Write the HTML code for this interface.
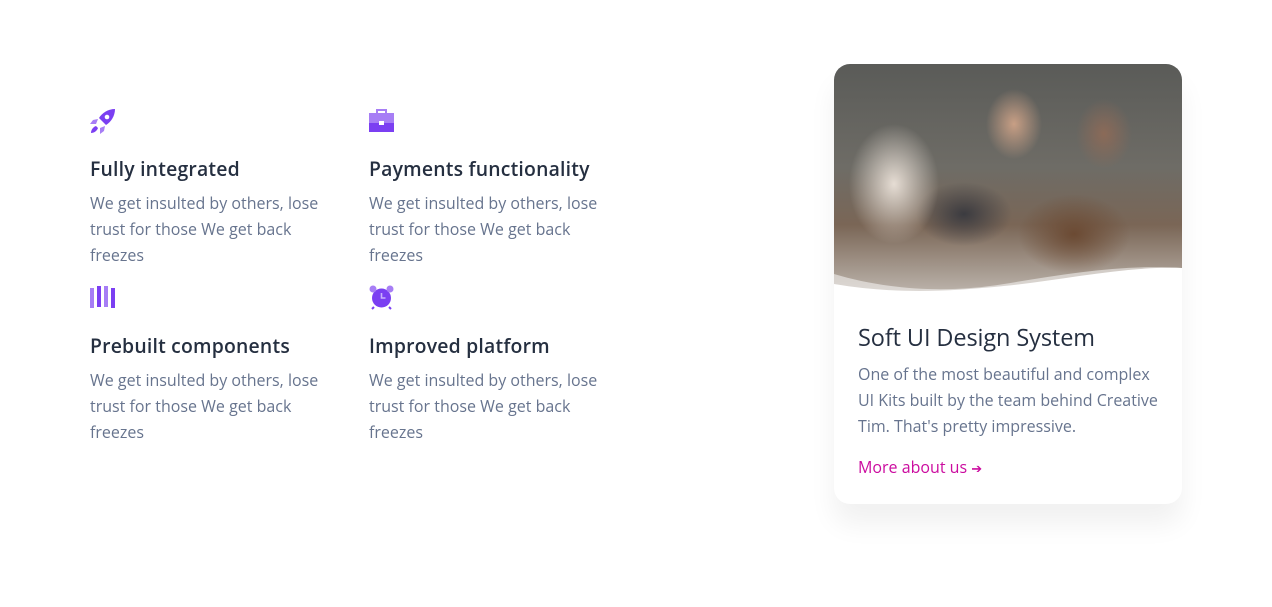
<!DOCTYPE html>
<html><head><style>
*{margin:0;padding:0;box-sizing:border-box}
body{width:1272px;height:607px;background:#fff;font-family:"Open Sans","Liberation Sans",sans-serif;position:relative;overflow:hidden}
.f{position:absolute;width:250px}
.f h5{font-size:19.4px;font-weight:600;color:#252f40;margin:0;line-height:24px;letter-spacing:0.2px}
.f p{font-size:16px;color:#67748e;line-height:26px;margin-top:9px}
.ic{position:absolute}
.card{position:absolute;left:834px;top:64px;width:348px;height:440px;border-radius:16px;background:#fff;box-shadow:0 20px 27px rgba(0,0,0,0.06);overflow:hidden}
.img{position:absolute;left:0;top:0;width:348px;height:230px;background:
radial-gradient(ellipse 40px 50px at 180px 60px,#c89f85 0,transparent 70%),
radial-gradient(ellipse 40px 50px at 270px 70px,#8b6a58 0,transparent 70%),
radial-gradient(ellipse 60px 80px at 60px 120px,#e6ddd4 0,transparent 75%),
radial-gradient(ellipse 60px 40px at 130px 150px,#3b3b40 0,transparent 80%),
radial-gradient(ellipse 70px 50px at 240px 170px,#6b4a33 0,transparent 80%),
linear-gradient(180deg,#5a5b58 0%,#6e6c66 45%,#7a6656 70%,#bdb5ad 100%)}
.card h4{position:absolute;left:24px;top:257px;font-size:23.5px;font-weight:500;color:#252f40;letter-spacing:-0.1px}
.card p{position:absolute;left:24px;top:297px;width:305px;font-size:16px;color:#67748e;line-height:26px}
.card a{position:absolute;left:24px;top:392px;font-size:16px;color:#cb0c9f;text-decoration:none}
</style></head><body>
<svg class="ic" style="left:90px;top:108px" width="26" height="26" viewBox="0 0 26 26"><path d="M25 1C18 1 12 5 9 10l7 7c5-3 9-9 9-16z" fill="#7b3ff2"/><circle cx="17" cy="9" r="2.3" fill="#fff"/><path d="M8 11l-5 1-3 4 6 0zM15 18l-1 5-4 3 0-6z" fill="#a77ef5"/><path d="M6 18c-3 1-5 4-5 7 3 0 6-2 7-5z" fill="#7b3ff2"/></svg>
<svg class="ic" style="left:369px;top:109px" width="25" height="23" viewBox="0 0 25 23"><path d="M8 4V1h9v3" stroke="#a77ef5" stroke-width="2" fill="none"/><rect x="0" y="4" width="25" height="10" fill="#a77ef5"/><rect x="0" y="14" width="25" height="9" fill="#7b3ff2"/><rect x="10" y="12" width="5" height="4" fill="#fff"/></svg>
<svg class="ic" style="left:90px;top:286px" width="26" height="23" viewBox="0 0 26 23"><rect x="0" y="2" width="4" height="20" fill="#a77ef5"/><rect x="7" y="0" width="4" height="21" fill="#7b3ff2"/><rect x="14" y="0" width="4" height="21" fill="#a77ef5"/><rect x="21" y="2" width="4" height="20" fill="#7b3ff2"/></svg>
<svg class="ic" style="left:369px;top:285px" width="25" height="25" viewBox="0 0 25 25"><circle cx="12.5" cy="13" r="9.5" fill="#7b3ff2"/><circle cx="4" cy="4" r="3.5" fill="#a77ef5"/><circle cx="21" cy="4" r="3.5" fill="#a77ef5"/><path d="M12.5 8v5h4" stroke="#c9b2fb" stroke-width="1.6" fill="none"/><path d="M5 22l-2 2M20 22l2 2" stroke="#7b3ff2" stroke-width="2"/></svg>
<div class="f" style="left:90px;top:157px"><h5>Fully integrated</h5><p>We get insulted by others, lose trust for those We get back freezes</p></div>
<div class="f" style="left:369px;top:157px"><h5>Payments functionality</h5><p>We get insulted by others, lose trust for those We get back freezes</p></div>
<div class="f" style="left:90px;top:334px"><h5>Prebuilt components</h5><p>We get insulted by others, lose trust for those We get back freezes</p></div>
<div class="f" style="left:369px;top:334px"><h5>Improved platform</h5><p>We get insulted by others, lose trust for those We get back freezes</p></div>
<div class="card">
<div class="img"></div>
<svg style="position:absolute;left:0;top:190px" width="348" height="50" viewBox="0 0 348 50"><path d="M0 20C50 35 110 40 170 30S290 10 348 14V50H0z" fill="rgba(255,255,255,0.5)"/><path d="M0 30C60 40 110 38 170 32S290 12 348 14V50H0z" fill="#fff"/></svg>
<h4>Soft UI Design System</h4>
<p>One of the most beautiful and complex UI Kits built by the team behind Creative Tim. That's pretty impressive.</p>
<a>More about us <span style="font-size:13px">&#10132;</span></a>
</div>
</body></html>
